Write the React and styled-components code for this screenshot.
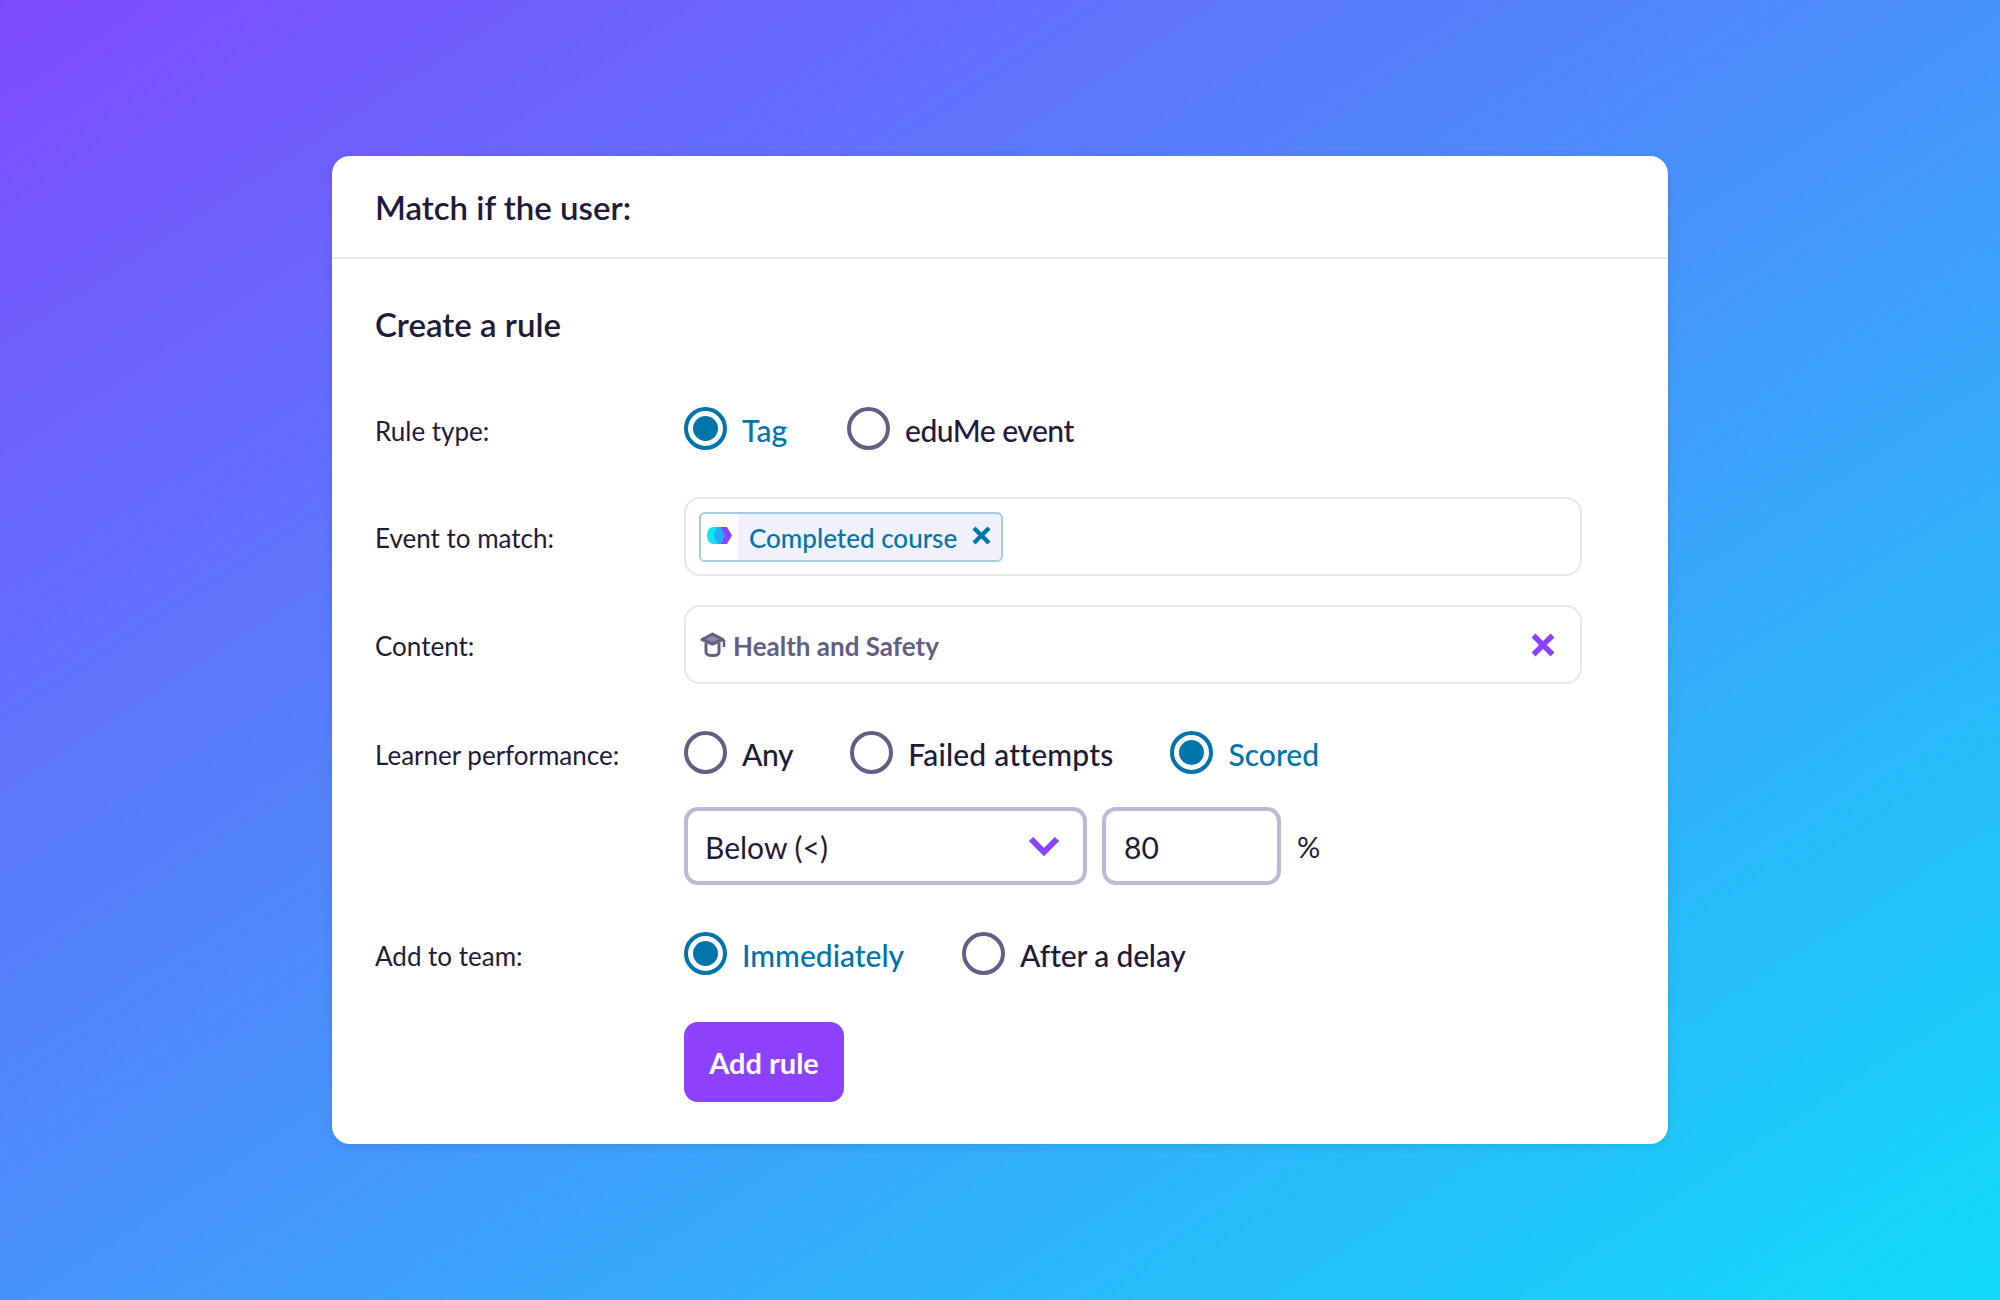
import React from 'react';
import styled, { createGlobalStyle } from 'styled-components';

const GlobalStyle = createGlobalStyle`
    html, body {
        margin: 0;
        padding: 0;
    }
    body {
        font-family: Lato, "Open Sans", sans-serif;
        color: #1e1b3a;
    }
`;

function Radio({ checked, label, tracking = 0 }) {
    return (
        <RadioItem>
            <RadioCircle $checked={checked} />
            <RadioLabel $checked={checked} $tracking={tracking}>{label}</RadioLabel>
        </RadioItem>
    );
}

function CloseIcon({ size, color }) {
    return (
        <svg width={size} height={size} viewBox="0 0 24 24" fill="none">
            <path d="M2.5 2.5 L21.5 21.5 M21.5 2.5 L2.5 21.5" stroke={color} strokeWidth="5.4" />
        </svg>
    );
}

function TagLogo() {
    return (
        <svg width="25" height="17" viewBox="0 0 25 17">
            <path d="M6 0 H14 L18 8.5 L14 17 H6 C2.5 17 0 13 0 8.5 C0 4 2.5 0 6 0 Z" fill="#12e2f4" />
            <path d="M11 0 H20 L25 8.5 L20 17 H11 L7 8.5 Z" fill="#8b41ff" />
            <path d="M11 0 H14 L18 8.5 L14 17 H11 L7 8.5 Z" fill="#27aaff" />
        </svg>
    );
}

function CapIcon() {
    return (
        <svg width="27" height="25" viewBox="0 0 27 25" fill="none">
            <path d="M13.5 2 L24 7.5 L13.5 12 L3 7.5 Z" fill="#8f8aa8" stroke="#645e85" strokeWidth="3" strokeLinejoin="round" />
            <path d="M7 11 V20 C7 22.5 9 23.5 13.5 23.5 C18 23.5 20 22.5 20 20 V11" stroke="#645e85" strokeWidth="3" />
            <path d="M25 8 V15" stroke="#645e85" strokeWidth="2.4" />
        </svg>
    );
}

function Chevron() {
    return (
        <svg width="32" height="20" viewBox="0 0 32 20" fill="none">
            <path d="M3 3 L16 16 L29 3" stroke="#8b41ff" strokeWidth="6" />
        </svg>
    );
}

export default function App() {
    return (
        <Page>
            <GlobalStyle />
            <Card>
                <CardHeader>Match if the user:</CardHeader>
                <CardBody>
                    <SectionTitle>Create a rule</SectionTitle>

                    <Row $top={60}>
                        <Label>Rule type:</Label>
                        <RadioGroup $gap={60}>
                            <Radio checked label="Tag" />
                            <Radio label="eduMe event" tracking={-0.5} />
                        </RadioGroup>
                    </Row>

                    <Row $top={46}>
                        <Label>Event to match:</Label>
                        <FieldBox>
                            <Chip>
                                <ChipLogo><TagLogo /></ChipLogo>
                                <ChipText>Completed course</ChipText>
                                <ChipClose><CloseIcon size={19} color="#0074ab" /></ChipClose>
                            </Chip>
                        </FieldBox>
                    </Row>

                    <Row $top={29}>
                        <Label>Content:</Label>
                        <FieldBox>
                            <ContentValue>
                                <CapIcon />
                                <ContentText>Health and Safety</ContentText>
                            </ContentValue>
                            <CloseIcon size={24} color="#8b41ff" />
                        </FieldBox>
                    </Row>

                    <Row $top={47}>
                        <Label>Learner performance:</Label>
                        <RadioGroup $gap={57}>
                            <Radio label="Any" tracking={-0.4} />
                            <Radio label="Failed attempts" tracking={0.2} />
                            <Radio checked label="Scored" />
                        </RadioGroup>
                    </Row>

                    <Row $top={32}>
                        <Label />
                        <ScoreFields>
                            <Select>
                                <FieldText>Below (&lt;)</FieldText>
                                <Chevron />
                            </Select>
                            <NumberInput>
                                <FieldText>80</FieldText>
                            </NumberInput>
                            <Percent>%</Percent>
                        </ScoreFields>
                    </Row>

                    <Row $top={47}>
                        <Label>Add to team:</Label>
                        <RadioGroup $gap={58}>
                            <Radio checked label="Immediately" />
                            <Radio label="After a delay" tracking={-0.15} />
                        </RadioGroup>
                    </Row>

                    <Row $top={46}>
                        <Label />
                        <AddButton>Add rule</AddButton>
                    </Row>
                </CardBody>
            </Card>
        </Page>
    );
}

const Page = styled.div`
    width: 2000px;
    height: 1300px;
    display: flex;
    align-items: center;
    justify-content: center;
    background: linear-gradient(147deg, #7f4aff 0%, #10dbf9 100%);
`;

const Card = styled.div`
    width: 1336px;
    height: 988px;
    box-sizing: border-box;
    background: #fff;
    border-radius: 18px;
    box-shadow: 0 2px 8px rgba(30, 27, 58, 0.12);
    display: flex;
    flex-direction: column;
`;

const CardHeader = styled.div`
    height: 104px;
    box-sizing: border-box;
    padding: 0 43px;
    display: flex;
    align-items: center;
    border-bottom: 2px solid #e6e5f0;
    font-size: 33px;
    font-weight: 600;
`;

const CardBody = styled.div`
    padding: 44px 86px 42px 43px;
`;

const SectionTitle = styled.div`
    height: 44px;
    line-height: 42px;
    font-size: 33px;
    font-weight: 600;
`;

const Row = styled.div`
    display: flex;
    align-items: center;
    margin-top: ${p => p.$top}px;
`;

const Label = styled.div`
    width: 309px;
    flex-shrink: 0;
    padding-top: 3px;
    font-size: 26px;
`;

const RadioGroup = styled.div`
    display: flex;
    align-items: center;
    gap: ${p => p.$gap}px;
    height: 44px;
`;

const RadioItem = styled.div`
    display: flex;
    align-items: center;
    gap: 15px;
`;

const RadioCircle = styled.span`
    width: 43px;
    height: 43px;
    margin-bottom: 2px;
    box-sizing: border-box;
    border-radius: 50%;
    border: 4px solid ${p => (p.$checked ? '#0074ab' : '#645e85')};
    display: flex;
    align-items: center;
    justify-content: center;

    &::after {
        content: "";
        display: ${p => (p.$checked ? 'block' : 'none')};
        width: 25px;
        height: 25px;
        border-radius: 50%;
        background: #0074ab;
    }
`;

const RadioLabel = styled.span`
    padding-top: 2px;
    font-size: 30px;
    font-weight: 500;
    letter-spacing: ${p => p.$tracking}px;
    color: ${p => (p.$checked ? '#0074ab' : '#1e1b3a')};
`;

const FieldBox = styled.div`
    width: 898px;
    height: 79px;
    box-sizing: border-box;
    padding: 0 25px 0 13px;
    border: 2px solid #e6e5f0;
    border-radius: 16px;
    display: flex;
    align-items: center;
    justify-content: space-between;
`;

const Chip = styled.div`
    height: 50px;
    width: 304px;
    box-sizing: border-box;
    display: flex;
    align-items: center;
    border: 2px solid #a3cbe6;
    border-radius: 6px;
    background: #f1f1fd;
    color: #0074ab;
    overflow: hidden;
`;

const ChipLogo = styled.div`
    width: 37px;
    flex-shrink: 0;
    align-self: stretch;
    background: #fff;
    display: flex;
    align-items: center;
    justify-content: center;
    padding-bottom: 3px;
    box-sizing: border-box;
`;

const ChipText = styled.span`
    margin-left: 11px;
    padding-top: 3px;
    font-size: 26px;
    font-weight: 500;
    white-space: nowrap;
`;

const ChipClose = styled.span`
    display: flex;
    margin-left: 15px;
    margin-bottom: 3px;
`;

const ContentValue = styled.div`
    display: flex;
    align-items: center;
    gap: 7px;
`;

const ContentText = styled.span`
    padding-top: 2px;
    font-size: 26px;
    font-weight: 700;
    color: #645e85;
`;

const ScoreFields = styled.div`
    display: flex;
    align-items: center;
`;

const FieldText = styled.span`
    padding-top: 2px;
`;

const Select = styled.div`
    width: 403px;
    height: 78px;
    box-sizing: border-box;
    padding: 0 23px 0 17px;
    border: 4px solid #bdb9d2;
    border-radius: 14px;
    display: flex;
    align-items: center;
    justify-content: space-between;
    font-size: 30px;
`;

const NumberInput = styled.div`
    width: 179px;
    height: 78px;
    box-sizing: border-box;
    margin-left: 15px;
    padding-left: 18px;
    border: 4px solid #bdb9d2;
    border-radius: 14px;
    display: flex;
    align-items: center;
    font-size: 30px;
`;

const Percent = styled.span`
    margin-left: 16px;
    font-size: 29px;
`;

const AddButton = styled.button`
    width: 160px;
    height: 80px;
    padding: 0;
    border: none;
    border-radius: 14px;
    background: #8b41ff;
    color: #fff;
    font-family: inherit;
    font-size: 29px;
    font-weight: 700;
`;
